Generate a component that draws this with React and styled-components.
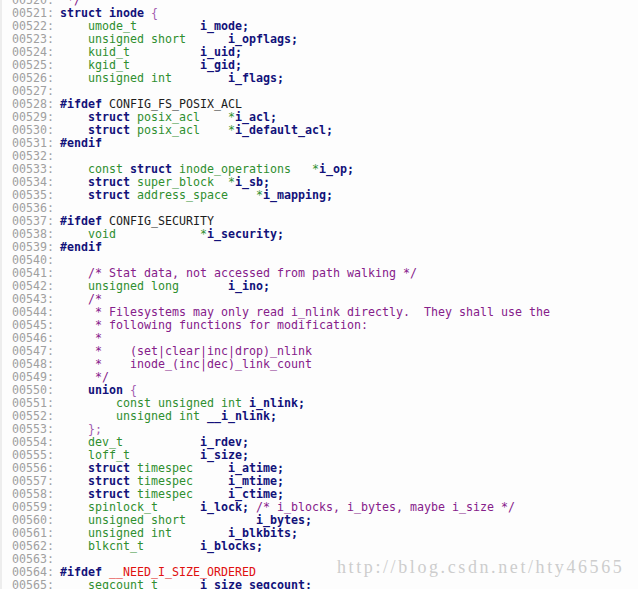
import styled, { createGlobalStyle } from "styled-components";

/* global */

const GlobalStyle = createGlobalStyle`
  html, body {
    margin: 0;
    padding: 0;
    background: #ffffff;
  }
`;

/* styled components */

const Page = styled.div`
  position: relative;
  width: 638px;
  height: 589px;
  overflow: hidden;
  background: #fdfdfd;
  border-left: 2px solid #ededed;
  box-sizing: border-box;
`;

const Listing = styled.div`
  display: flex;
  flex-direction: column;
  margin-top: -6px;
  font-family: "DejaVu Sans Mono", "Liberation Mono", monospace;
  font-size: 11.63px;
  line-height: 13px;
`;

const Row = styled.div`
  display: flex;
  height: 13px;
`;

const LineNo = styled.span`
  flex: 0 0 48px;
  padding-left: 10px;
  color: #a0a0a0;
  white-space: pre;
`;

const Code = styled.div`
  flex: 1;
  white-space: pre;
  tab-size: 4;
  -moz-tab-size: 4;
  color: #1c1c1c;
`;

const colors = {
  k: "#12127a",
  n: "#12127a",
  t: "#2f8f2f",
  c: "#86208a",
  p: "#a25cb0",
  m: "#e01010",
  x: "#1c1c1c",
};

const Token = styled.span`
  color: ${(p) => colors[p.$kind]};
  font-weight: ${(p) => (p.$kind === "k" || p.$kind === "n" ? "bold" : "normal")};
`;

const Watermark = styled.div`
  position: absolute;
  left: 335px;
  top: 558px;
  font-family: "Liberation Serif", "DejaVu Serif", serif;
  font-size: 18px;
  line-height: 18px;
  letter-spacing: 2.6px;
  color: #cdcdcd;
  white-space: nowrap;
`;

/* data */

const T = "\t";

const lines = [
  [["c", " */"]],
  [["k", "struct inode"], ["x", " "], ["p", "{"]],
  [["x", T], ["t", "umode_t"], ["x", T + T + T], ["n", "i_mode;"]],
  [["x", T], ["t", "unsigned short"], ["x", T + T], ["n", "i_opflags;"]],
  [["x", T], ["t", "kuid_t"], ["x", T + T + T], ["n", "i_uid;"]],
  [["x", T], ["t", "kgid_t"], ["x", T + T + T], ["n", "i_gid;"]],
  [["x", T], ["t", "unsigned int"], ["x", T + T], ["n", "i_flags;"]],
  [],
  [["k", "#ifdef"], ["x", " CONFIG_FS_POSIX_ACL"]],
  [["x", T], ["k", "struct"], ["t", " posix_acl"], ["x", T], ["t", "*"], ["n", "i_acl;"]],
  [["x", T], ["k", "struct"], ["t", " posix_acl"], ["x", T], ["t", "*"], ["n", "i_default_acl;"]],
  [["k", "#endif"]],
  [],
  [["x", T], ["t", "const "], ["k", "struct"], ["t", " inode_operations"], ["x", T], ["t", "*"], ["n", "i_op;"]],
  [["x", T], ["k", "struct"], ["t", " super_block"], ["x", T], ["t", "*"], ["n", "i_sb;"]],
  [["x", T], ["k", "struct"], ["t", " address_space"], ["x", T], ["t", "*"], ["n", "i_mapping;"]],
  [],
  [["k", "#ifdef"], ["x", " CONFIG_SECURITY"]],
  [["x", T], ["t", "void"], ["x", T + T + T], ["t", "*"], ["n", "i_security;"]],
  [["k", "#endif"]],
  [],
  [["x", T], ["c", "/* Stat data, not accessed from path walking */"]],
  [["x", T], ["t", "unsigned long"], ["x", T + T], ["n", "i_ino;"]],
  [["x", T], ["c", "/*"]],
  [["x", T], ["c", " * Filesystems may only read i_nlink directly.  They shall use the"]],
  [["x", T], ["c", " * following functions for modification:"]],
  [["x", T], ["c", " *"]],
  [["x", T], ["c", " *    (set|clear|inc|drop)_nlink"]],
  [["x", T], ["c", " *    inode_(inc|dec)_link_count"]],
  [["x", T], ["c", " */"]],
  [["x", T], ["k", "union"], ["x", " "], ["p", "{"]],
  [["x", T + T], ["t", "const unsigned int "], ["n", "i_nlink;"]],
  [["x", T + T], ["t", "unsigned int "], ["n", "__i_nlink;"]],
  [["x", T], ["p", "};"]],
  [["x", T], ["t", "dev_t"], ["x", T + T + T], ["n", "i_rdev;"]],
  [["x", T], ["t", "loff_t"], ["x", T + T + T], ["n", "i_size;"]],
  [["x", T], ["k", "struct"], ["t", " timespec"], ["x", T + T], ["n", "i_atime;"]],
  [["x", T], ["k", "struct"], ["t", " timespec"], ["x", T + T], ["n", "i_mtime;"]],
  [["x", T], ["k", "struct"], ["t", " timespec"], ["x", T + T], ["n", "i_ctime;"]],
  [["x", T], ["t", "spinlock_t"], ["x", T + T], ["n", "i_lock;"], ["x", T], ["c", "/* i_blocks, i_bytes, maybe i_size */"]],
  [["x", T], ["t", "unsigned short"], ["x", "          "], ["n", "i_bytes;"]],
  [["x", T], ["t", "unsigned int"], ["x", T + T], ["n", "i_blkbits;"]],
  [["x", T], ["t", "blkcnt_t"], ["x", T + T], ["n", "i_blocks;"]],
  [],
  [["k", "#ifdef"], ["x", " "], ["m", "__NEED_I_SIZE_ORDERED"]],
  [["x", T], ["t", "seqcount_t"], ["x", T + T], ["n", "i_size_seqcount;"]],
];

const FIRST = 520;

function App() {
  return (
    <Page>
      <GlobalStyle />
      <Listing>
        {lines.map((tokens, i) => (
          <Row key={i}>
            <LineNo>{String(FIRST + i).padStart(5, "0")}:</LineNo>
            <Code>
              {tokens.map(([kind, text], j) => (
                <Token key={j} $kind={kind}>
                  {text}
                </Token>
              ))}
            </Code>
          </Row>
        ))}
      </Listing>
      <Watermark>http://blog.csdn.net/hty46565</Watermark>
    </Page>
  );
}

export default App;
